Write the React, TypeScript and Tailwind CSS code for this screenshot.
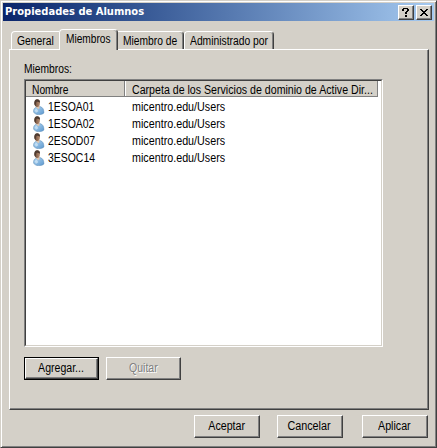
import React from "react";

const members = ["1ESOA01", "1ESOA02", "2ESOD07", "3ESOC14"];

function UserIcon() {
  return (
    <svg width="13" height="16" viewBox="0 0 13 16" className="block shrink-0">
      <defs>
        <linearGradient id="shirt" x1="0" y1="0" x2="1" y2="1">
          <stop offset="0" stopColor="#b5d8f2" />
          <stop offset="1" stopColor="#5c98cf" />
        </linearGradient>
        <linearGradient id="face" x1="0" y1="0" x2="1" y2="0">
          <stop offset="0" stopColor="#6b4a38" />
          <stop offset="1" stopColor="#b98f72" />
        </linearGradient>
      </defs>
      <path d="M1.6 13C1.2 10.2 2.6 8.8 4.5 8.1L8 7.6C10.5 8.2 11.9 9.9 11.9 14C10.8 15.1 8.8 15.7 6.5 15.6C4.2 15.5 2.2 14.6 1.6 13Z" fill="url(#shirt)" stroke="#5587b2" strokeWidth=".5" />
      <path d="M4.2 7L7.4 6.8L7.6 8.7L6.6 10.3L4.4 8.8Z" fill="#dfc5ae" />
      <ellipse cx="5.2" cy="4.2" rx="2.7" ry="3.8" fill="url(#face)" />
      <path d="M2.4 5.2C1.9 1.8 3.2.3 5.2.3C7.3.3 8.3 1.7 7.9 3.9C7.1 2.7 5.5 3.1 4.5 2.8C4 4.2 3.7 5.5 3.5 7Z" fill="#4f3b30" />
      <path d="M2.7 11.5Q3.8 9.4 5 10L6.3 12.3L4 13.8Z" fill="#d5eaf8" opacity=".7" />
    </svg>
  );
}

function TitleButton({ children }: { children: React.ReactNode }) {
  return (
    <div className="h-[15px] w-4 border border-t-white border-l-white border-r-[#404040] border-b-[#404040] bg-[#d4d0c8] shadow-[inset_-1px_-1px_0_#808080]">
      {children}
    </div>
  );
}

function Button({ label, scale }: { label: string; scale: string }) {
  return (
    <div className="flex h-[23px] w-[66px] items-center justify-center border border-t-white border-l-white border-r-[#404040] border-b-[#404040] shadow-[inset_-1px_-1px_0_#808080]">
      <span className={`${scale} leading-[14px]`}>{label}</span>
    </div>
  );
}

export default function App() {
  return (
    <div className="flex h-[448px] w-[437px] flex-col overflow-hidden border border-t-[#d4d0c8] border-l-[#d4d0c8] border-r-[#404040] border-b-[#404040] bg-[#d4d0c8] px-[2px] pt-[2px] font-['Liberation_Sans',Arial,sans-serif] text-[12px] whitespace-nowrap text-black shadow-[inset_1px_1px_0_#fff,inset_-1px_-1px_0_#808080]">
      <header className="flex h-[18px] shrink-0 items-center bg-linear-to-r from-[#0a246a] to-[#a6caf0] pr-[2px] pl-[2px]">
        <span className="origin-left scale-x-[1.005] font-['DejaVu_Sans_Condensed','DejaVu_Sans',sans-serif] text-[11px] leading-[18px] font-bold text-white">
          Propiedades de Alumnos
        </span>
        <div className="ml-auto flex gap-[2px]">
          <TitleButton>
            <svg width="14" height="13" viewBox="0 0 14 13" shapeRendering="crispEdges">
              <path d="M4 2h5v1H4zM3 3h2v2H3zM8 3h2v2H8zM7 5h2v1H7zM6 6h2v2H6zM6 9h2v2H6z" />
            </svg>
          </TitleButton>
          <TitleButton>
            <svg width="14" height="13" viewBox="0 0 14 13" shapeRendering="crispEdges">
              <path d="M3 3h2v1h1v1h2v-1h1v-1h2v1h-1v1h-1v1h-1v1h1v1h1v1h1v1h-2v-1h-1v-1h-2v1h-1v1h-2v-1h1v-1h1v-1h1v-1h-1v-1h-1v-1h-1z" />
            </svg>
          </TitleButton>
        </div>
      </header>

      <nav className="z-10 mt-2 -mb-px ml-2 flex h-[21px] shrink-0 items-end">
        <div className="mb-px h-[18px] w-[48px] rounded-tl-sm border-t border-l border-white pt-[2px] pl-[5px]">
          <span className="block origin-left scale-x-[.86] leading-[14px]">General</span>
        </div>
        <div className="h-[21px] w-[59px] rounded-t-sm border-t border-r border-l border-t-white border-r-[#404040] border-l-white bg-[#d4d0c8] pt-[2px] pl-[6px] shadow-[inset_-1px_0_0_#808080]">
          <span className="block origin-left scale-x-[.845] leading-[14px]">Miembros</span>
        </div>
        <div className="mb-px h-[18px] w-[66px] rounded-tr-sm border-t border-r border-t-white border-r-[#404040] pt-[2px] pl-[5px] shadow-[inset_-1px_0_0_#808080]">
          <span className="block origin-left scale-x-[.855] leading-[14px]">Miembro de</span>
        </div>
        <div className="mb-px h-[18px] w-[90px] rounded-t-sm border-t border-r border-l border-t-white border-r-[#404040] border-l-white pt-[2px] pl-[5px] shadow-[inset_-1px_0_0_#808080]">
          <span className="block origin-left scale-x-[.86] leading-[14px]">Administrado por</span>
        </div>
      </nav>

      <main className="ml-[6px] flex h-[361px] w-[420px] shrink-0 flex-col border border-t-white border-l-white border-r-[#404040] border-b-[#404040] pt-3 pl-[14px] shadow-[inset_-1px_-1px_0_#808080]">
        <span className="block h-[17px] origin-left scale-x-[.855] leading-[14px]">Miembros:</span>
        <section className="h-[268px] w-[359px] shrink-0 border border-t-[#808080] border-l-[#808080] border-r-white border-b-white bg-white">
          <div className="h-full border border-t-[#404040] border-l-[#404040] border-r-[#d4d0c8] border-b-[#d4d0c8]">
            <div className="flex h-4 w-[352px] border-r border-b border-[#808080] bg-[#d4d0c8]">
              <div className="w-[99px] shrink-0 border-r border-[#808080] pt-[2px] pl-[6px]">
                <span className="block origin-left scale-x-[.855] leading-[14px]">Nombre</span>
              </div>
              <div className="min-w-0 flex-1 border-l border-white pt-[2px] pl-[6px]">
                <span className="block w-max origin-left scale-x-[.885] leading-[14px]">Carpeta de los Servicios de dominio de Active Dir...</span>
              </div>
            </div>
            <div className="pt-px">
              {members.map((name) => (
                <div key={name} className="flex h-[17px] items-center pl-[6px]">
                  <UserIcon />
                  <span className="ml-[3px] w-[84px] origin-left scale-x-[.87] leading-[14px]">{name}</span>
                  <span className="origin-left scale-x-[.895] leading-[14px]">micentro.edu/Users</span>
                </div>
              ))}
            </div>
          </div>
        </section>
        <div className="mt-[10px] flex gap-[7px]">
          <div className="h-[23px] w-[75px] border border-black">
            <div className="flex h-full items-center justify-center border border-t-white border-l-white border-r-[#404040] border-b-[#404040] shadow-[inset_-1px_-1px_0_#808080]">
              <span className="mb-px scale-x-[.88] leading-[14px]">Agregar...</span>
            </div>
          </div>
          <div className="flex h-[23px] w-[75px] items-center justify-center border border-t-white border-l-white border-r-[#404040] border-b-[#404040] shadow-[inset_-1px_-1px_0_#808080]">
            <span className="mb-px scale-x-[.88] leading-[14px] text-[#808080] [text-shadow:1px_1px_0_#fff]">Quitar</span>
          </div>
        </div>
      </main>

      <footer className="mt-[5px] flex pl-[191px]">
        <Button label="Aceptar" scale="mb-px mr-px scale-x-[.89]" />
        <div className="ml-[17px]"><Button label="Cancelar" scale="mb-px mr-px scale-x-[.9]" /></div>
        <div className="ml-[19px]"><Button label="Aplicar" scale="mb-px mr-px scale-x-[.89]" /></div>
      </footer>
    </div>
  );
}
